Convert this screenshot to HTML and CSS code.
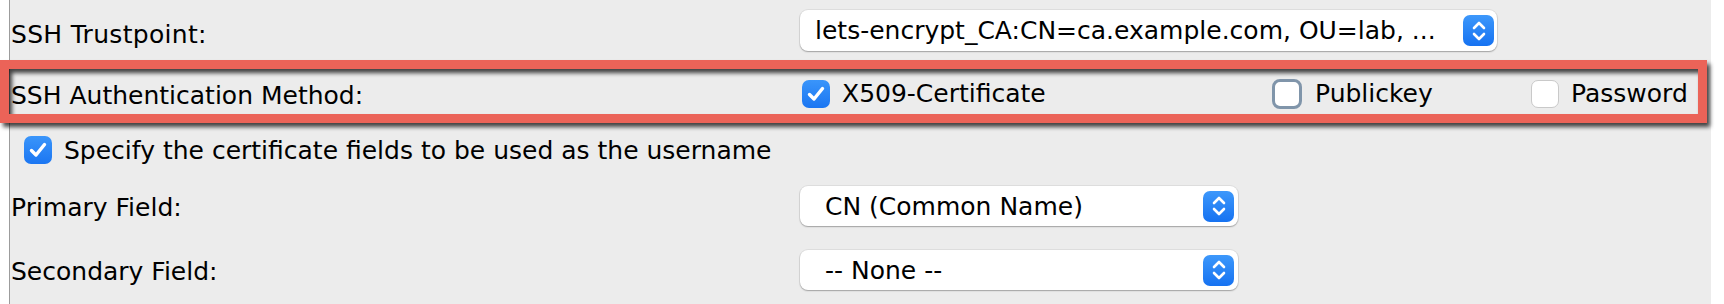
FILE: index.html
```html
<!DOCTYPE html>
<html>
<head>
<meta charset="utf-8">
<link rel="stylesheet" href="styles.css">
</head>
<body>
<div class="page">
  <div class="panel">
    <div class="row r1">
      <div class="label">SSH Trustpoint:</div>
      <div class="select wide">
        <span class="sel-text first">lets-encrypt_CA:CN=ca.example.com, OU=lab, ...</span>
        <span class="stepper"><svg width="30" height="30" viewBox="0 0 30 30"><path d="M10 12 L15 7 L20 12 M10 18 L15 23 L20 18" fill="none" stroke="#fff" stroke-width="2.6" stroke-linecap="round" stroke-linejoin="round"/></svg></span>
      </div>
    </div>
    <div class="row r2">
      <div class="label">SSH Authentication Method:</div>
      <div class="checks">
        <div class="check"><span class="box on"><svg width="28" height="28" viewBox="0 0 28 28"><path d="M7.5 14.5 L12 19 L20.5 8.5" fill="none" stroke="#fff" stroke-width="3.4" stroke-linecap="round" stroke-linejoin="round"/></svg></span><span>X509-Certificate</span></div>
        <div class="check"><span class="box focus"></span><span>Publickey</span></div>
        <div class="check"><span class="box"></span><span>Password</span></div>
      </div>
    </div>
    <div class="row r3">
      <div class="check indent"><span class="box on"><svg width="28" height="28" viewBox="0 0 28 28"><path d="M7.5 14.5 L12 19 L20.5 8.5" fill="none" stroke="#fff" stroke-width="3.4" stroke-linecap="round" stroke-linejoin="round"/></svg></span><span>Specify the certificate fields to be used as the username</span></div>
    </div>
    <div class="row r4">
      <div class="label">Primary Field:</div>
      <div class="select narrow">
        <span class="sel-text">CN (Common Name)</span>
        <span class="stepper"><svg width="30" height="30" viewBox="0 0 30 30"><path d="M10 12 L15 7 L20 12 M10 18 L15 23 L20 18" fill="none" stroke="#fff" stroke-width="2.6" stroke-linecap="round" stroke-linejoin="round"/></svg></span>
      </div>
    </div>
    <div class="row r5">
      <div class="label">Secondary Field:</div>
      <div class="select narrow">
        <span class="sel-text">-- None --</span>
        <span class="stepper"><svg width="30" height="30" viewBox="0 0 30 30"><path d="M10 12 L15 7 L20 12 M10 18 L15 23 L20 18" fill="none" stroke="#fff" stroke-width="2.6" stroke-linecap="round" stroke-linejoin="round"/></svg></span>
      </div>
    </div>
  </div>
  <div class="annot"></div>
</div>
</body>
</html>
```
FILE: styles.css
```css
html, body {
  margin: 0;
  padding: 0;
  background: #ffffff;
}

.page {
  position: relative;
  width: 1724px;
  height: 304px;
  overflow: hidden;
  font-family: "DejaVu Sans", "Liberation Sans", sans-serif;
  font-size: 25px;
  color: #000;
}

.panel {
  margin-left: 9px;
  width: 1702px;
  height: 304px;
  box-sizing: border-box;
  border-left: 1px solid #9c9c9c;
  background: #ececec;
  padding: 10px 0 0 1px;
  display: flex;
  flex-direction: column;
}

.row {
  display: grid;
  grid-template-columns: 789px 1fr;
  align-items: center;
}

.r1 { height: 41px; }
.r2 { height: 43px; margin-top: 21px; }
.r3 { height: 40px; margin-top: 15px; display: flex; }
.r4 { height: 40px; margin-top: 16px; }
.r5 { height: 40px; margin-top: 24px; }

.label {
  white-space: nowrap;
  line-height: 1;
  padding-top: 3px;
}

.r1 .label {
  padding-top: 7px;
  letter-spacing: 0.3px;
}

.select {
  height: 100%;
  box-sizing: border-box;
  background: #fff;
  border-radius: 8px;
  box-shadow: 0 0 0 1px rgba(0, 0, 0, 0.06), 0 1px 1.5px rgba(0, 0, 0, 0.28);
  display: flex;
  align-items: center;
  justify-content: space-between;
  padding: 0 4px 0 25px;
}

.select.wide { width: 697px; padding-left: 15px; padding-right: 3px; }
.select.narrow { width: 438px; }

.sel-text {
  white-space: nowrap;
  line-height: 1;
}

.stepper {
  width: 31px;
  height: 31px;
  border-radius: 7px;
  background: linear-gradient(#3d98fb, #1672f1);
  display: flex;
  align-items: center;
  justify-content: center;
}

.checks {
  display: grid;
  grid-template-columns: 470px 259px auto;
  padding-left: 2px;
  align-items: center;
}

.check {
  display: flex;
  align-items: center;
  gap: 12px;
  white-space: nowrap;
  line-height: 1;
}

.check.indent { margin-left: 13px; }

.box {
  width: 28px;
  height: 28px;
  box-sizing: border-box;
  border-radius: 7px;
  background: #fff;
  border: 1px solid #c9c9c9;
  display: flex;
  align-items: center;
  justify-content: center;
  flex: none;
}

.box.on {
  border: none;
  background: linear-gradient(#3a95fa, #1b76f2);
}

.box.focus {
  width: 30px;
  height: 30px;
  border: 3px solid #8095aa;
  border-radius: 8px;
  margin-right: 1px;
}

.annot {
  position: absolute;
  left: 0;
  top: 60px;
  width: 1707px;
  height: 63px;
  box-sizing: border-box;
  border: 9px solid #eb6358;
  filter: drop-shadow(3px 4px 2px rgba(0, 0, 0, 0.72));
}
```
